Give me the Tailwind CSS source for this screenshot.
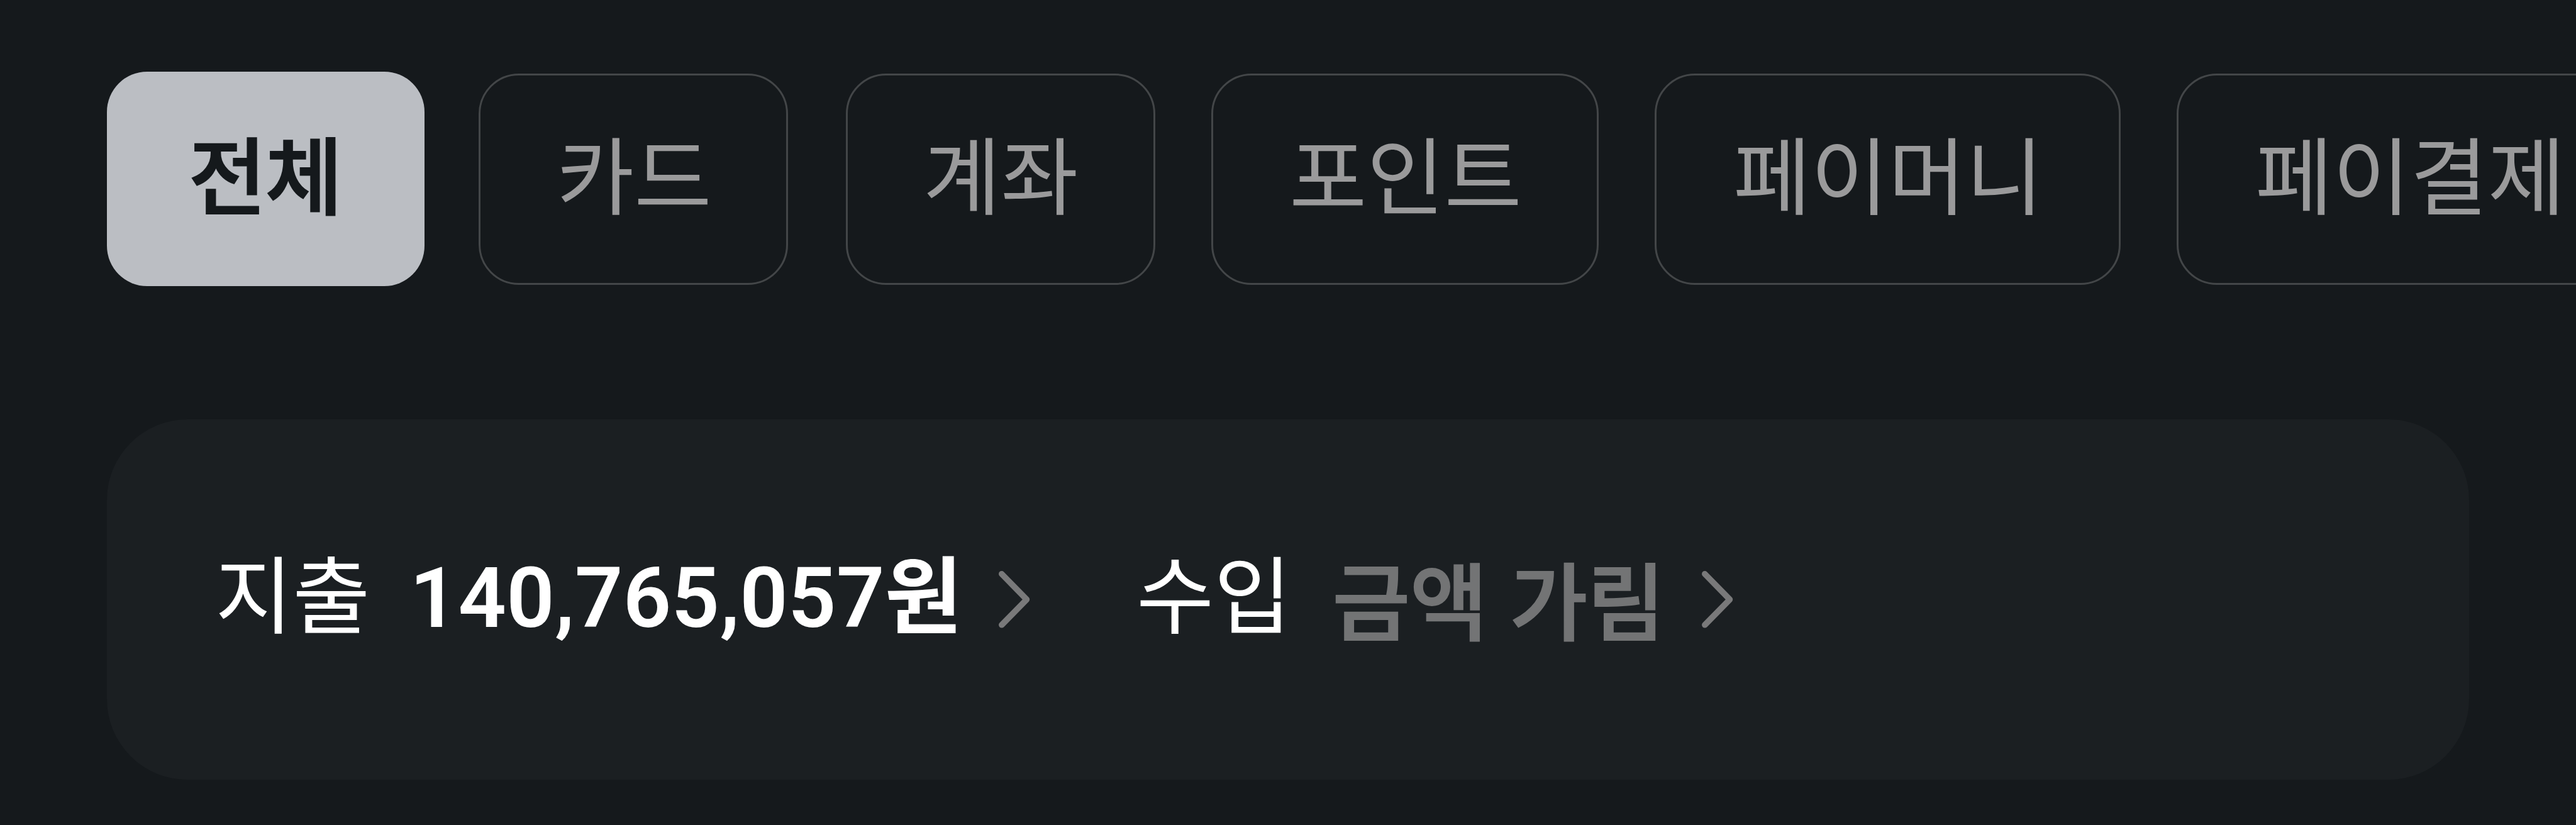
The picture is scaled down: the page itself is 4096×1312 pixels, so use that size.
<!DOCTYPE html>
<html lang="ko">
<head>
<meta charset="utf-8">
<title>내역</title>
<script src="https://cdn.jsdelivr.net/npm/@tailwindcss/browser@4"></script>
</head>
<body class="w-[4096px] h-[1312px] overflow-hidden bg-[#15191c] font-['Noto_Sans_CJK_KR',sans-serif] text-[134px] leading-none whitespace-nowrap">
<!-- Filter chips -->
<nav class="flex items-center gap-[89px] w-[4096px] h-[341px] mt-[114px] pl-[170px] overflow-hidden text-[#9a9a9b]">
  <button class="shrink-0 flex items-center w-[505px] h-[341px] pl-[130px] pb-[24px] rounded-[64px] bg-[#bbbec3] text-[#15191c] font-medium tracking-[-1.5px] [-webkit-text-stroke:2.2px]">전체</button>
  <button class="shrink-0 flex items-center -ml-[3px] w-[492px] h-[336px] pl-[121px] pb-[24px] rounded-[64px] border-3 border-[#434648]">카드</button>
  <button class="shrink-0 flex items-center ml-[3px] w-[492px] h-[336px] pl-[120px] pb-[24px] rounded-[64px] border-3 border-[#434648]">계좌</button>
  <button class="shrink-0 flex items-center w-[616px] h-[336px] pl-[121px] pb-[24px] rounded-[64px] border-3 border-[#434648]">포인트</button>
  <button class="shrink-0 flex items-center w-[741px] h-[336px] pl-[122px] pb-[24px] rounded-[64px] border-3 border-[#434648]">페이머니</button>
  <button class="shrink-0 flex items-center w-[741px] h-[336px] pl-[122px] pb-[24px] rounded-[64px] border-3 border-[#434648]">페이결제</button>
</nav>
<!-- Spending and income summary -->
<section class="flex items-start w-[3756px] h-[573px] mt-[212px] ml-[170px] pt-[205px] pl-[172px] rounded-[128px] bg-[#1b1f22] text-white">
  <span class="h-[134px]">지출</span>
  <span class="h-[134px] ml-[63px] font-bold"><span class="font-[Roboto] font-semibold tracking-[0.3px]">140,765,057</span>원</span>
  <svg class="shrink-0 w-[50px] h-[91px] mt-[36px] ml-[58px]" viewBox="0 0 50 91" fill="none" stroke="#79797a" stroke-width="9.5" stroke-linecap="round" stroke-linejoin="round"><path d="M4.75 4.75 44.5 45.3 4.75 85.8"/></svg>
  <span class="h-[134px] ml-[169px]">수입</span>
  <span class="w-[524px] h-[134px] mt-[11px] ml-[65px] font-medium text-[#737475] [word-spacing:-2px] [-webkit-text-stroke:2.2px]">금액 가림</span>
  <svg class="shrink-0 w-[50px] h-[91px] mt-[36px] ml-[63px]" viewBox="0 0 50 91" fill="none" stroke="#79797a" stroke-width="9.5" stroke-linecap="round" stroke-linejoin="round"><path d="M4.75 4.75 44.5 45.3 4.75 85.8"/></svg>
</section>
</body>
</html>
